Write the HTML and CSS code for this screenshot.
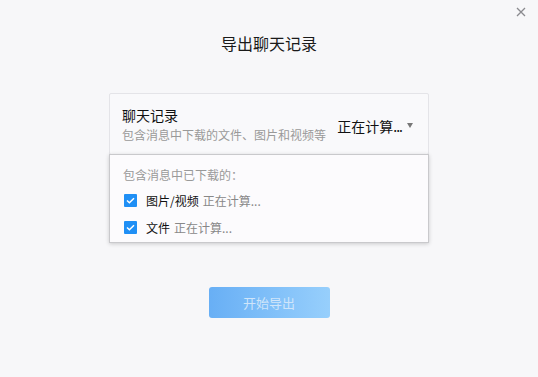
FILE: index.html
```html
<!DOCTYPE html>
<html lang="zh-CN">
<head>
    <meta charset="UTF-8">
    <title>导出聊天记录</title>
    <link rel="stylesheet" href="styles.css">
</head>
<body>
    <div class="dialog">
        <button class="close" aria-label="关闭">
            <svg width="10" height="10" viewBox="0 0 10 10"><path d="M1 1L9 9M9 1L1 9" stroke="#8a8a8e" stroke-width="1.3"/></svg>
        </button>
        <h1 class="title">导出聊天记录</h1>

        <div class="card">
            <div class="card-text">
                <div class="card-name">聊天记录</div>
                <div class="card-desc">包含消息中下载的文件、图片和视频等</div>
            </div>
            <div class="card-size">正在计算<span class="dots">...</span><span class="arrow"></span></div>

            <div class="menu">
                <div class="menu-head">包含消息中已下载的：</div>
                <label class="menu-row">
                    <span class="check"><svg width="9" height="7" viewBox="0 0 9 7"><path d="M1 3.5L3.4 5.8L8 1.2" fill="none" stroke="#fff" stroke-width="1.5"/></svg></span>
                    <span class="menu-name">图片/视频</span>
                    <span class="menu-size">正在计算...</span>
                </label>
                <label class="menu-row">
                    <span class="check"><svg width="9" height="7" viewBox="0 0 9 7"><path d="M1 3.5L3.4 5.8L8 1.2" fill="none" stroke="#fff" stroke-width="1.5"/></svg></span>
                    <span class="menu-name">文件</span>
                    <span class="menu-size">正在计算...</span>
                </label>
            </div>
        </div>

        <button class="start">开始导出</button>
    </div>
</body>
</html>
```

FILE: styles.css
```css
* {
    box-sizing: border-box;
    margin: 0;
    padding: 0;
}
body {
    font-family: "Noto Sans CJK SC", "Noto Sans", sans-serif;
    background: #f7f7f9;
    color: #222;
}
.dialog {
    position: relative;
    width: 538px;
    height: 377px;
    display: flex;
    flex-direction: column;
    align-items: center;
    padding-top: 30px;
}
.close {
    position: absolute;
    top: 7px;
    right: 12px;
    border: none;
    background: none;
    width: 10px;
    height: 10px;
    display: flex;
}
.title {
    font-size: 16px;
    font-weight: normal;
    line-height: 26px;
    color: #1a1a1a;
}
.card {
    position: relative;
    margin-top: 37px;
    width: 320px;
    height: 62px;
    background: #f9f9fb;
    border: 1px solid #e4e4e8;
    border-radius: 2px;
    display: flex;
    align-items: center;
    justify-content: space-between;
    padding: 0 15px 0 12px;
}
.card-text {
    padding-top: 2px;
}
.card-name {
    font-size: 14px;
    line-height: 19px;
    color: #111;
}
.card-desc {
    font-size: 12px;
    line-height: 20px;
    color: #999;
}
.card-size {
    font-size: 14px;
    color: #111;
    margin-top: 3px;
    display: flex;
    align-items: center;
}
.dots {
    letter-spacing: -1px;
}
.arrow {
    margin-left: 5px;
    width: 0;
    height: 0;
    border-left: 3.5px solid transparent;
    border-right: 3.5px solid transparent;
    border-top: 5px solid #777;
}
.menu {
    position: absolute;
    top: 60px;
    left: -1px;
    width: 320px;
    height: 89px;
    background: #fcfbfd;
    border: 1px solid #c9c9cc;
    box-shadow: 0 1px 4px rgba(0, 0, 0, 0.18);
    padding: 11px 13px 0;
    z-index: 2;
}
.menu-head {
    font-size: 12px;
    line-height: 18px;
    color: #999;
    margin-bottom: 3px;
}
.menu-row {
    display: flex;
    align-items: center;
    height: 27px;
    font-size: 12px;
}
.check {
    width: 13px;
    height: 13px;
    background: #1f8ff5;
    border-radius: 1px;
    display: flex;
    align-items: center;
    justify-content: center;
    margin-right: 9px;
    margin-left: 1px;
}
.menu-name {
    color: #111;
    margin-right: 4px;
}
.menu-size {
    color: #888;
}
.start {
    margin-top: 132px;
    width: 121px;
    height: 31px;
    border: none;
    border-radius: 3px;
    background: linear-gradient(90deg, #68aff5, #97cffc);
    color: #cfe5fa;
    font-family: inherit;
    font-size: 13px;
}
```
